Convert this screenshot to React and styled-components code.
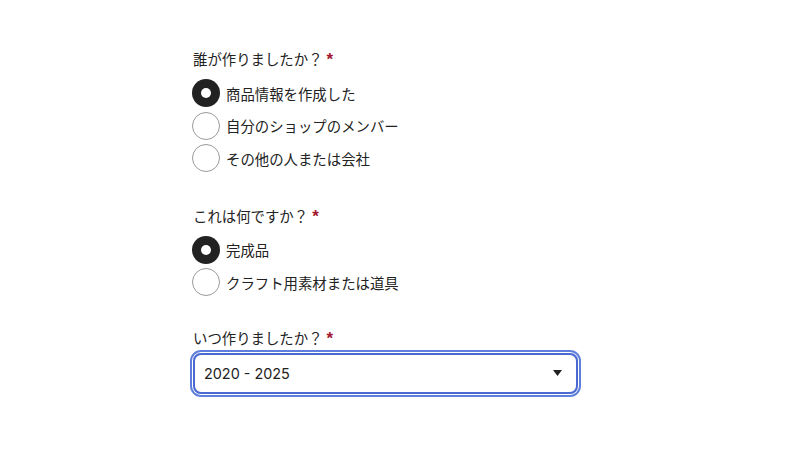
import React from "react";
import styled, { createGlobalStyle } from "styled-components";

const Global = createGlobalStyle`
  html, body { margin: 0; padding: 0; background: #fff; }
  body {
    font-family: Inter, "Noto Sans CJK JP", sans-serif;
    color: #222;
  }
`;

const Page = styled.div`
  width: 812px;
  height: 457px;
  box-sizing: border-box;
  padding: 48px 0 0 190px;
  display: flex;
  flex-direction: column;
`;

const Fieldset = styled.fieldset`
  border: 0;
  margin: 0 0 ${(p) => p.$after || 0}px 0;
  padding: 0;
  min-width: 0;
  display: flex;
  flex-direction: column;
`;

const Legend = styled.div`
  font-family: "Noto Sans CJK JP", sans-serif;
  font-size: 14.4px;
  line-height: 21px;
  color: #222;
  padding-left: 3px;
  margin-bottom: ${(p) => p.$gap || 8}px;
  display: flex;
  align-items: center;
`;

const Req = styled.span`
  color: #a3172f;
  font-family: "Liberation Sans", sans-serif;
  font-weight: 700;
  font-size: 17px;
  margin-left: 4px;
  line-height: 1;
  position: relative;
  top: 1px;
`;

const Options = styled.div`
  display: flex;
  flex-direction: column;
`;

const Option = styled.label`
  display: flex;
  align-items: center;
  height: 32.5px;
  gap: 6px;
  padding-left: 2px;
  font-family: "Noto Sans CJK JP", sans-serif;
  font-size: 14.4px;
  color: #222;
`;

const Circle = styled.span`
  width: 28px;
  height: 28px;
  box-sizing: border-box;
  border-radius: 50%;
  flex: none;
  display: flex;
  align-items: center;
  justify-content: center;
  background: ${(p) => (p.$on ? "#222" : "#fff")};
  border: ${(p) => (p.$on ? "0" : "1.5px solid #9a9a9a")};
  &::after {
    content: "";
    display: ${(p) => (p.$on ? "block" : "none")};
    width: 10px;
    height: 10px;
    border-radius: 50%;
    background: #fff;
  }
`;

const SelectBox = styled.div`
  margin-left: 3px;
  width: 385px;
  height: 41px;
  box-sizing: border-box;
  border: 2px solid #4a6ad2;
  border-radius: 8px;
  box-shadow: 0 0 0 1px #fff, 0 0 0 3px #5f7fdc;
  display: flex;
  align-items: center;
  justify-content: space-between;
  padding: 0 14px 0 9px;
  font-family: Inter, sans-serif;
  font-size: 14.4px;
  color: #222;
`;

const Caret = styled.svg`
  width: 9px;
  height: 6px;
  display: block;
`;

function Radio({ on, children }) {
  return (
    <Option>
      <Circle $on={on} />
      <span>{children}</span>
    </Option>
  );
}

export default function App() {
  return (
    <>
      <Global />
      <Page>
        <Fieldset $after={30}>
          <Legend $gap={8}>
            誰が作りましたか？<Req>*</Req>
          </Legend>
          <Options>
            <Radio on>商品情報を作成した</Radio>
            <Radio>自分のショップのメンバー</Radio>
            <Radio>その他の人または会社</Radio>
          </Options>
        </Fieldset>
        <Fieldset $after={28}>
          <Legend $gap={8}>
            これは何ですか？<Req>*</Req>
          </Legend>
          <Options>
            <Radio on>完成品</Radio>
            <Radio>クラフト用素材または道具</Radio>
          </Options>
        </Fieldset>
        <Fieldset>
          <Legend $gap={5}>
            いつ作りましたか？<Req>*</Req>
          </Legend>
          <SelectBox>
            <span>2020 - 2025</span>
            <Caret viewBox="0 0 9 6">
              <path d="M0 0 H9 L4.5 6 Z" fill="#222" />
            </Caret>
          </SelectBox>
        </Fieldset>
      </Page>
    </>
  );
}
